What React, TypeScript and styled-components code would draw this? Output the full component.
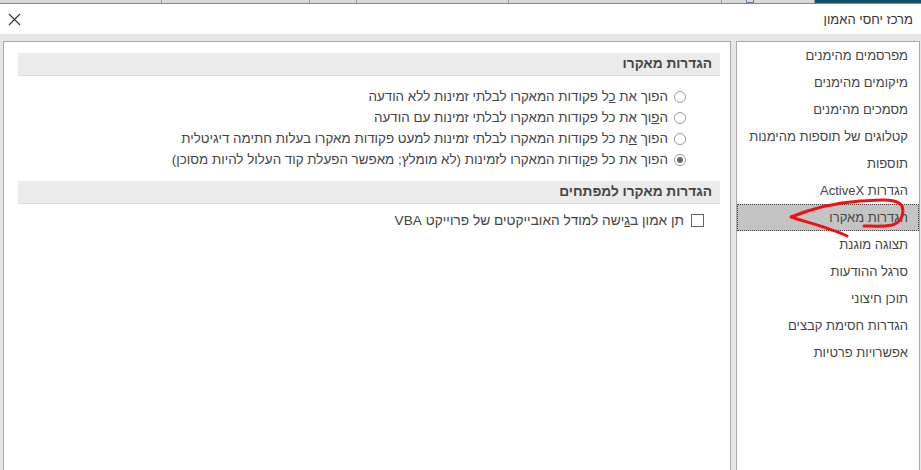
import styled, { createGlobalStyle } from "styled-components";

const GlobalStyle = createGlobalStyle`
  html, body {
    margin: 0;
    padding: 0;
    background: #ffffff;
  }
  body {
    font-family: "Liberation Sans", "DejaVu Sans", Arial, sans-serif;
    font-size: 13px;
    color: #444444;
  }
`;

const categories = [
    "מפרסמים מהימנים",
    "מיקומים מהימנים",
    "מסמכים מהימנים",
    "קטלוגים של תוספות מהימנות",
    "תוספות",
    "הגדרות ActiveX",
    "הגדרות מאקרו",
    "תצוגה מוגנת",
    "סרגל ההודעות",
    "תוכן חיצוני",
    "הגדרות חסימת קבצים",
    "אפשרויות פרטיות"
];

const stripSegments = [162, 148, 47, 152, 213, 93];

const App = () => {
    return (
        <Page>
            <GlobalStyle />
            <TopStrip>
                {stripSegments.map((w, i) => (
                    <StripSegment key={i} style={{ width: w }}>
                        {i === 5 && <StripIcon />}
                    </StripSegment>
                ))}
                <StripAccent />
            </TopStrip>

            <TitleBar>
                <Title>מרכז יחסי האמון</Title>
                <CloseButton width="13" height="13" viewBox="0 0 13 13">
                    <path d="M1 1 L12 12 M12 1 L1 12" stroke="#333333" strokeWidth="1.1" fill="none" />
                </CloseButton>
            </TitleBar>

            <Body>
                <ListPanel>
                    {categories.map((c, i) => (
                        <ListItem key={c} $selected={i === 6}>{c}</ListItem>
                    ))}
                </ListPanel>

                <MainPanel>
                    <SectionHeader>הגדרות מאקרו</SectionHeader>
                    <OptionList>
                        <OptionRow>
                            <Radio />
                            <span>הפוך את <u>כ</u>ל פקודות המאקרו לבלתי זמינות ללא הודעה</span>
                        </OptionRow>
                        <OptionRow>
                            <Radio />
                            <span>ה<u>פ</u>וך את כל פקודות המאקרו לבלתי זמינות עם הודעה</span>
                        </OptionRow>
                        <OptionRow>
                            <Radio />
                            <span>הפוך <u>א</u>ת כל פקודות המאקרו לבלתי זמינות למעט פקודות מאקרו בעלות חתימה דיגיטלית</span>
                        </OptionRow>
                        <OptionRow>
                            <Radio $checked />
                            <span>הפוך את כל פ<u>ק</u>ודות המאקרו לזמינות (לא מומלץ; מאפשר הפעלת קוד העלול להיות מסוכן)</span>
                        </OptionRow>
                    </OptionList>

                    <SectionHeader>הגדרות מאקרו למפתחים</SectionHeader>
                    <CheckRow>
                        <CheckBox />
                        <span>תן אמון ב<u>ג</u>ישה למודל האובייקטים של פרוייקט VBA</span>
                    </CheckRow>
                </MainPanel>
            </Body>

            <Annotation width="921" height="470" viewBox="0 0 921 470">
                <path
                    d="M 847 236 C 830 228, 806 222, 791 217 C 808 210, 832 203, 860 201 C 880 200, 897 198, 902 206 C 905 215, 900 223, 892 225 C 882 227, 872 226, 864 226"
                    fill="none"
                    stroke="#ee1111"
                    strokeWidth="3"
                    strokeLinecap="round"
                    strokeLinejoin="round"
                />
            </Annotation>
        </Page>
    );
};

export default App;

const Page = styled.div`
    position: relative;
    width: 921px;
    height: 470px;
    overflow: hidden;
    display: flex;
    flex-direction: column;
    background: #ffffff;
`;

const TopStrip = styled.div`
    display: flex;
    height: 3px;
    background: #d9d9d9;
    border-bottom: 1px solid #8a8a8a;
`;

const StripSegment = styled.div`
    position: relative;
    height: 100%;
    border-right: 1px solid #9a9a9a;
    box-sizing: border-box;
`;

const StripIcon = styled.div`
    position: absolute;
    left: 24px;
    top: 0;
    width: 8px;
    height: 3px;
    border: 1px solid #6a7fa0;
    border-top: none;
    box-sizing: border-box;
`;

const StripAccent = styled.div`
    flex: 1;
    height: 100%;
    background: #0f5268;
`;

const TitleBar = styled.div`
    direction: rtl;
    display: flex;
    align-items: center;
    justify-content: space-between;
    height: 30px;
    padding: 0 8px 0 8px;
    background: #ffffff;
`;

const Title = styled.div`
    font-size: 13px;
    color: #333333;
`;

const CloseButton = styled.svg`
    display: block;
    margin-top: 1px;
`;

const Body = styled.div`
    direction: rtl;
    flex: 1;
    display: flex;
    gap: 5px;
    padding: 7px 1px 0 3px;
    background: #e6e6e6;
    min-height: 0;
`;

const ListPanel = styled.div`
    width: 182px;
    background: #ffffff;
    border: 1px solid #a8a8a8;
    border-bottom: none;
    display: flex;
    flex-direction: column;
`;

const ListItem = styled.div<{ $selected?: boolean }>`
    height: 27px;
    line-height: 25px;
    padding-right: 10px;
    box-sizing: border-box;
    white-space: nowrap;
    color: #444444;
    font-size: 13px;
    background: ${p => (p.$selected ? "#c4c4c4" : "transparent")};
    border: 1px dotted ${p => (p.$selected ? "#444444" : "transparent")};
`;

const MainPanel = styled.div`
    flex: 1;
    background: #ffffff;
    border: 1px solid #a8a8a8;
    border-bottom: none;
    padding: 11px 10px 0 14px;
    display: flex;
    flex-direction: column;
`;

const SectionHeader = styled.div`
    height: 22px;
    line-height: 22px;
    padding-right: 8px;
    background: #ebebeb;
    border-bottom: 1px solid #dcdcdc;
    font-weight: bold;
    font-size: 13.7px;
    color: #444444;
`;

const OptionList = styled.div`
    display: flex;
    flex-direction: column;
    padding: 10px 34px 11px 0;
`;

const OptionRow = styled.div`
    display: flex;
    align-items: center;
    gap: 6px;
    height: 21px;
    white-space: nowrap;
    font-size: 13.4px;
    color: #444444;
`;

const Radio = styled.span<{ $checked?: boolean }>`
    position: relative;
    width: 12px;
    height: 12px;
    border: 1px solid #9a9a9a;
    border-radius: 50%;
    box-sizing: border-box;
    flex-shrink: 0;
    background: #ffffff;

    &::after {
        content: "";
        display: ${p => (p.$checked ? "block" : "none")};
        position: absolute;
        top: 2px;
        left: 2px;
        width: 6px;
        height: 6px;
        border-radius: 50%;
        background: #6a6a6a;
    }
`;

const CheckRow = styled.div`
    display: flex;
    align-items: center;
    gap: 7px;
    height: 20px;
    margin-top: 6px;
    padding-right: 16px;
    white-space: nowrap;
    font-size: 13.7px;
    color: #444444;
`;

const CheckBox = styled.span`
    width: 13px;
    height: 13px;
    border: 1px solid #666666;
    box-sizing: border-box;
    flex-shrink: 0;
    background: #ffffff;
`;

const Annotation = styled.svg`
    position: absolute;
    top: 0;
    left: 0;
    pointer-events: none;
`;
